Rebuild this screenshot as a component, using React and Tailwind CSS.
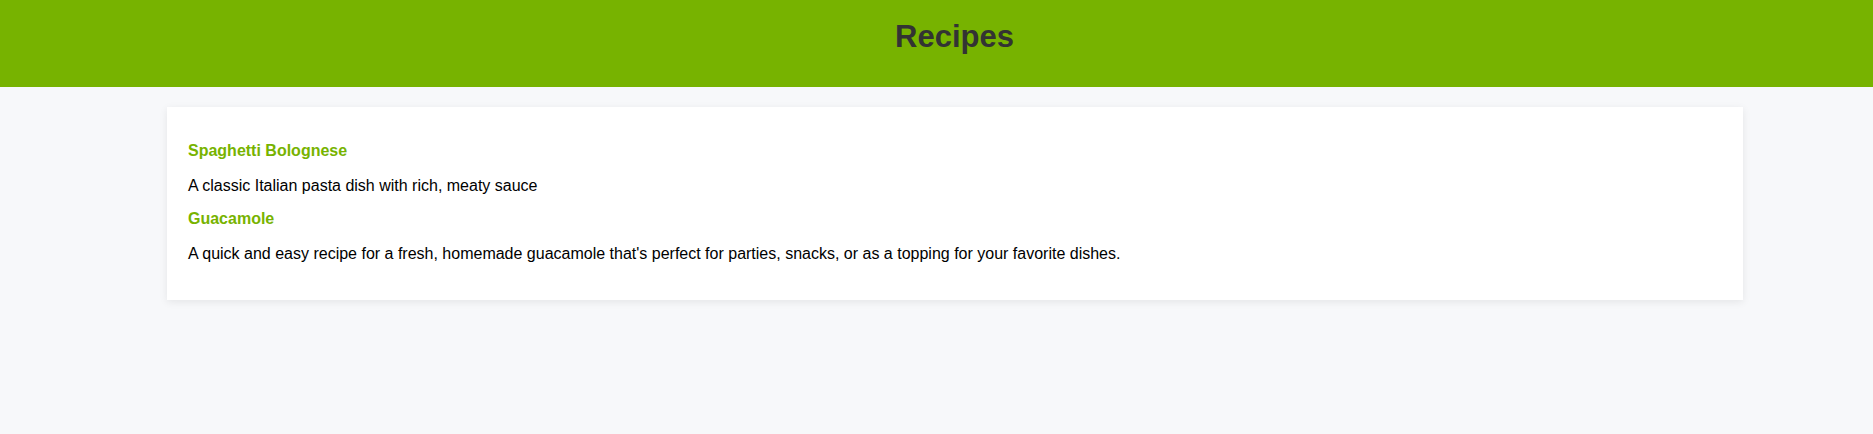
import React from 'react';

const recipes = [
    {
        name: 'Spaghetti Bolognese',
        description: 'A classic Italian pasta dish with rich, meaty sauce',
    },
    {
        name: 'Guacamole',
        description:
            "A quick and easy recipe for a fresh, homemade guacamole that's perfect for parties, snacks, or as a topping for your favorite dishes.",
    },
];

const App = () => {
    return (
        <div className="min-h-screen bg-[#f7f8fa] font-['Liberation_Sans',Arial,sans-serif]">
            <header className="h-[87px] bg-[#77b300] pl-[36px] pt-[17px] text-center">
                <h1 className="text-[31px] font-bold leading-[40px] text-[#333333]">Recipes</h1>
            </header>

            <main className="pt-[20px]">
                <div className="ml-[167px] w-[1576px] bg-white px-[21px] pt-[35px] pb-[37px] shadow-[0_2px_8px_rgba(0,0,0,0.08)]">
                    {recipes.map((recipe, index) => (
                        <div key={recipe.name} className={index > 0 ? 'mt-[15px]' : ''}>
                            <h3 className="text-base font-bold leading-[18px] text-[#77b300]">
                                {recipe.name}
                            </h3>
                            <p className="mt-[17px] text-base leading-[18px] text-black">
                                {recipe.description}
                            </p>
                        </div>
                    ))}
                </div>
            </main>
        </div>
    );
};

export default App;
